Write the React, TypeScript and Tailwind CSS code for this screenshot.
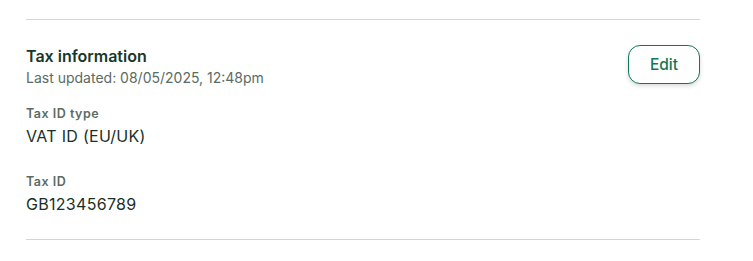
export default function App() {
  return (
    <div
      className="w-[753px] h-[261px] bg-white pt-[19px] pl-[26px] pr-[53px]"
      style={{ fontFamily: "Inter, 'Noto Sans', sans-serif" }}
    >
      <div className="border-t border-[#d4d6d5]" />

      {/* header */}
      <div className="flex items-start justify-between pt-[25px]">
        <div>
          <h2 className="text-[16px] leading-[23px] font-semibold text-[#17372b]">Tax information</h2>
          <p className="text-[14px] leading-[20px] text-[#5b6b64]">Last updated: 08/05/2025, 12:48pm</p>
        </div>
        <button className="h-[39px] w-[72px] rounded-[12px] border border-[#0e7a52] bg-white pt-[1px] text-[15.5px] font-medium text-[#0e7a52] shadow-[0_2px_4px_rgba(0,0,0,0.15)]">
          Edit
        </button>
      </div>

      {/* fields */}
      <div className="mt-[19px]">
        <div className="text-[12.5px] leading-[14px] font-semibold tracking-[0.5px] text-[#5b6b64]">Tax ID type</div>
        <div className="mt-[5px] text-[16px] leading-[20px] tracking-[0.3px] text-[#1b2f27]">VAT ID (EU/UK)</div>
      </div>
      <div className="mt-[29px]">
        <div className="text-[12.5px] leading-[14px] font-semibold tracking-[0.5px] text-[#5b6b64]">Tax ID</div>
        <div className="mt-[5px] text-[16px] leading-[20px] tracking-[0.3px] text-[#1b2f27]">GB123456789</div>
      </div>

      <div className="mt-[25px] border-t border-[#d4d6d5]" />
    </div>
  );
}
